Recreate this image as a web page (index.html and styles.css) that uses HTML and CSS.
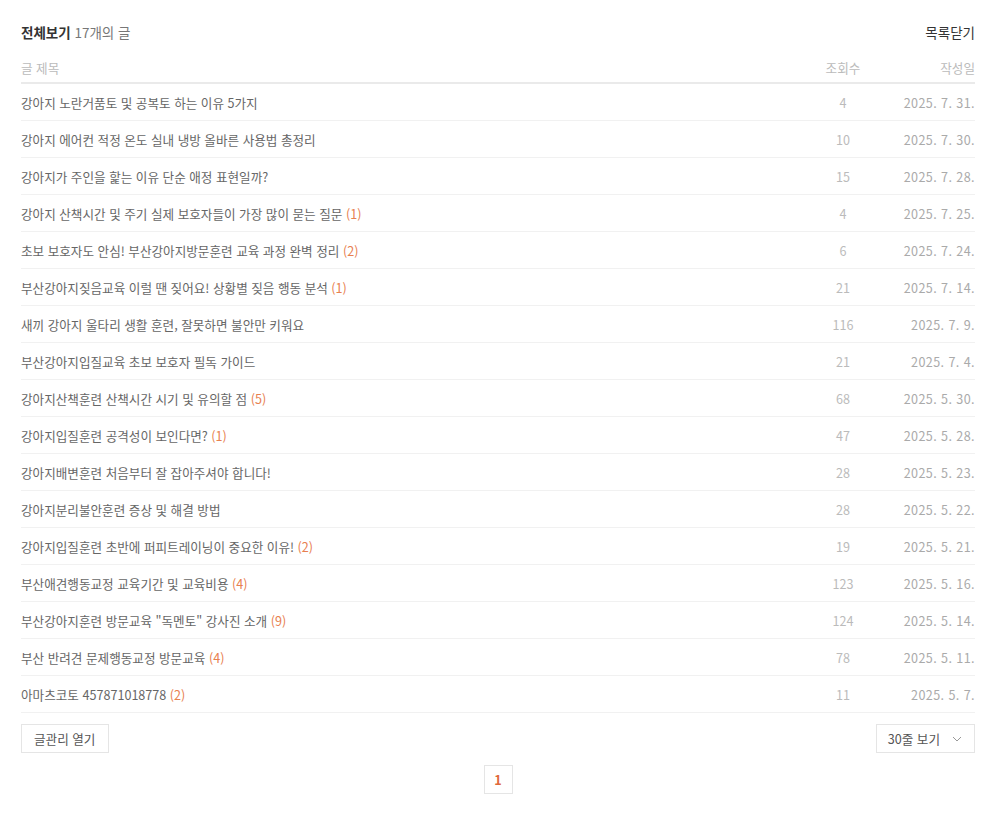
FILE: index.html
```
<!DOCTYPE html>
<html lang="ko">
<head>
    <meta charset="UTF-8">
    <title>전체보기</title>
    <link rel="stylesheet" href="styles.css">
</head>
<body>

    <div id="post-list">
        <div class="list-head">
            <h2 class="list-title"><strong>전체보기</strong> 17개의 글</h2>
            <a class="list-close">목록닫기</a>
        </div>

        <table class="list-table">
            <thead>
                <tr>
                    <th class="col-title">글 제목</th>
                    <th class="col-view">조회수</th>
                    <th class="col-date">작성일</th>
                </tr>
            </thead>
            <tbody>
                <tr><td class="col-title">강아지 노란거품토 및 공복토 하는 이유 5가지</td><td class="col-view">4</td><td class="col-date">2025. 7. 31.</td></tr>
                <tr><td class="col-title">강아지 에어컨 적정 온도 실내 냉방 올바른 사용법 총정리</td><td class="col-view">10</td><td class="col-date">2025. 7. 30.</td></tr>
                <tr><td class="col-title">강아지가 주인을 핥는 이유 단순 애정 표현일까?</td><td class="col-view">15</td><td class="col-date">2025. 7. 28.</td></tr>
                <tr><td class="col-title">강아지 산책시간 및 주기 실제 보호자들이 가장 많이 묻는 질문 <span class="cmt">(1)</span></td><td class="col-view">4</td><td class="col-date">2025. 7. 25.</td></tr>
                <tr><td class="col-title">초보 보호자도 안심! 부산강아지방문훈련 교육 과정 완벽 정리 <span class="cmt">(2)</span></td><td class="col-view">6</td><td class="col-date">2025. 7. 24.</td></tr>
                <tr><td class="col-title">부산강아지짖음교육 이럴 땐 짖어요! 상황별 짖음 행동 분석 <span class="cmt">(1)</span></td><td class="col-view">21</td><td class="col-date">2025. 7. 14.</td></tr>
                <tr><td class="col-title">새끼 강아지 울타리 생활 훈련, 잘못하면 불안만 키워요</td><td class="col-view">116</td><td class="col-date">2025. 7. 9.</td></tr>
                <tr><td class="col-title">부산강아지입질교육 초보 보호자 필독 가이드</td><td class="col-view">21</td><td class="col-date">2025. 7. 4.</td></tr>
                <tr><td class="col-title">강아지산책훈련 산책시간 시기 및 유의할 점 <span class="cmt">(5)</span></td><td class="col-view">68</td><td class="col-date">2025. 5. 30.</td></tr>
                <tr><td class="col-title">강아지입질훈련 공격성이 보인다면? <span class="cmt">(1)</span></td><td class="col-view">47</td><td class="col-date">2025. 5. 28.</td></tr>
                <tr><td class="col-title">강아지배변훈련 처음부터 잘 잡아주셔야 합니다!</td><td class="col-view">28</td><td class="col-date">2025. 5. 23.</td></tr>
                <tr><td class="col-title">강아지분리불안훈련 증상 및 해결 방법</td><td class="col-view">28</td><td class="col-date">2025. 5. 22.</td></tr>
                <tr><td class="col-title">강아지입질훈련 초반에 퍼피트레이닝이 중요한 이유! <span class="cmt">(2)</span></td><td class="col-view">19</td><td class="col-date">2025. 5. 21.</td></tr>
                <tr><td class="col-title">부산애견행동교정 교육기간 및 교육비용 <span class="cmt">(4)</span></td><td class="col-view">123</td><td class="col-date">2025. 5. 16.</td></tr>
                <tr><td class="col-title">부산강아지훈련 방문교육 "독멘토" 강사진 소개 <span class="cmt">(9)</span></td><td class="col-view">124</td><td class="col-date">2025. 5. 14.</td></tr>
                <tr><td class="col-title">부산 반려견 문제행동교정 방문교육 <span class="cmt">(4)</span></td><td class="col-view">78</td><td class="col-date">2025. 5. 11.</td></tr>
                <tr><td class="col-title">아마츠코토 457871018778 <span class="cmt">(2)</span></td><td class="col-view">11</td><td class="col-date">2025. 5. 7.</td></tr>
            </tbody>
        </table>

        <div class="list-foot">
            <a class="btn">글관리 열기</a>
            <a class="btn btn-select">30줄 보기
                <svg width="10" height="6" viewBox="0 0 10 6"><path d="M1 1 L5 5 L9 1" fill="none" stroke="#999" stroke-width="1"/></svg>
            </a>
        </div>

        <div class="pager">
            <a class="current">1</a>
        </div>
    </div>

</body>
</html>
```

FILE: styles.css
```
*{
    margin: 0;
    padding: 0;
}
body{
    font-family: "Noto Sans CJK KR", "Noto Sans", sans-serif;
    font-size: 12.6px;
    color: #666;
    background: #fff;
}
a{
    cursor: pointer;
}
#post-list{
    width: 954px;
    padding: 20px 21px 0;
}
.list-head{
    display: flex;
    justify-content: space-between;
    align-items: center;
    height: 24px;
    font-size: 13.5px;
}
.list-title{
    font-size: 13.5px;
    font-weight: normal;
    color: #777;
}
.list-title strong{
    color: #333;
    font-weight: bold;
}
.list-close{
    color: #333;
}
.list-table{
    width: 100%;
    margin-top: 8px;
    border-collapse: collapse;
    table-layout: fixed;
}
.list-table th{
    height: 30px;
    font-weight: normal;
    color: #bbb;
    border-bottom: 2px solid #eaeaea;
    vertical-align: middle;
}
.list-table td{
    height: 36px;
    border-bottom: 1px solid #f1f1f1;
    vertical-align: middle;
}
.list-table .col-title{
    text-align: left;
}
.list-table .col-view{
    width: 60px;
    text-align: center;
    color: #bbb;
}
.list-table .col-date{
    width: 102px;
    text-align: right;
    color: #bbb;
}
.list-table td.col-date{
    color: #aaa;
    letter-spacing: 0.4px;
}
.cmt{
    color: #e8804f;
}
.list-foot{
    display: flex;
    justify-content: space-between;
    margin-top: 11px;
}
.btn{
    display: flex;
    align-items: center;
    gap: 12px;
    height: 27px;
    padding: 0 13px 0 12px;
    border: 1px solid #e5e5e5;
    color: #555;
}
.btn-select{
    padding: 0 12px 0 11px;
}
.pager{
    display: flex;
    justify-content: center;
    margin-top: 12px;
}
.pager a{
    display: flex;
    align-items: center;
    justify-content: center;
    width: 27px;
    height: 27px;
    border: 1px solid #e5e5e5;
    color: #e0693a;
    font-weight: bold;
}
```
